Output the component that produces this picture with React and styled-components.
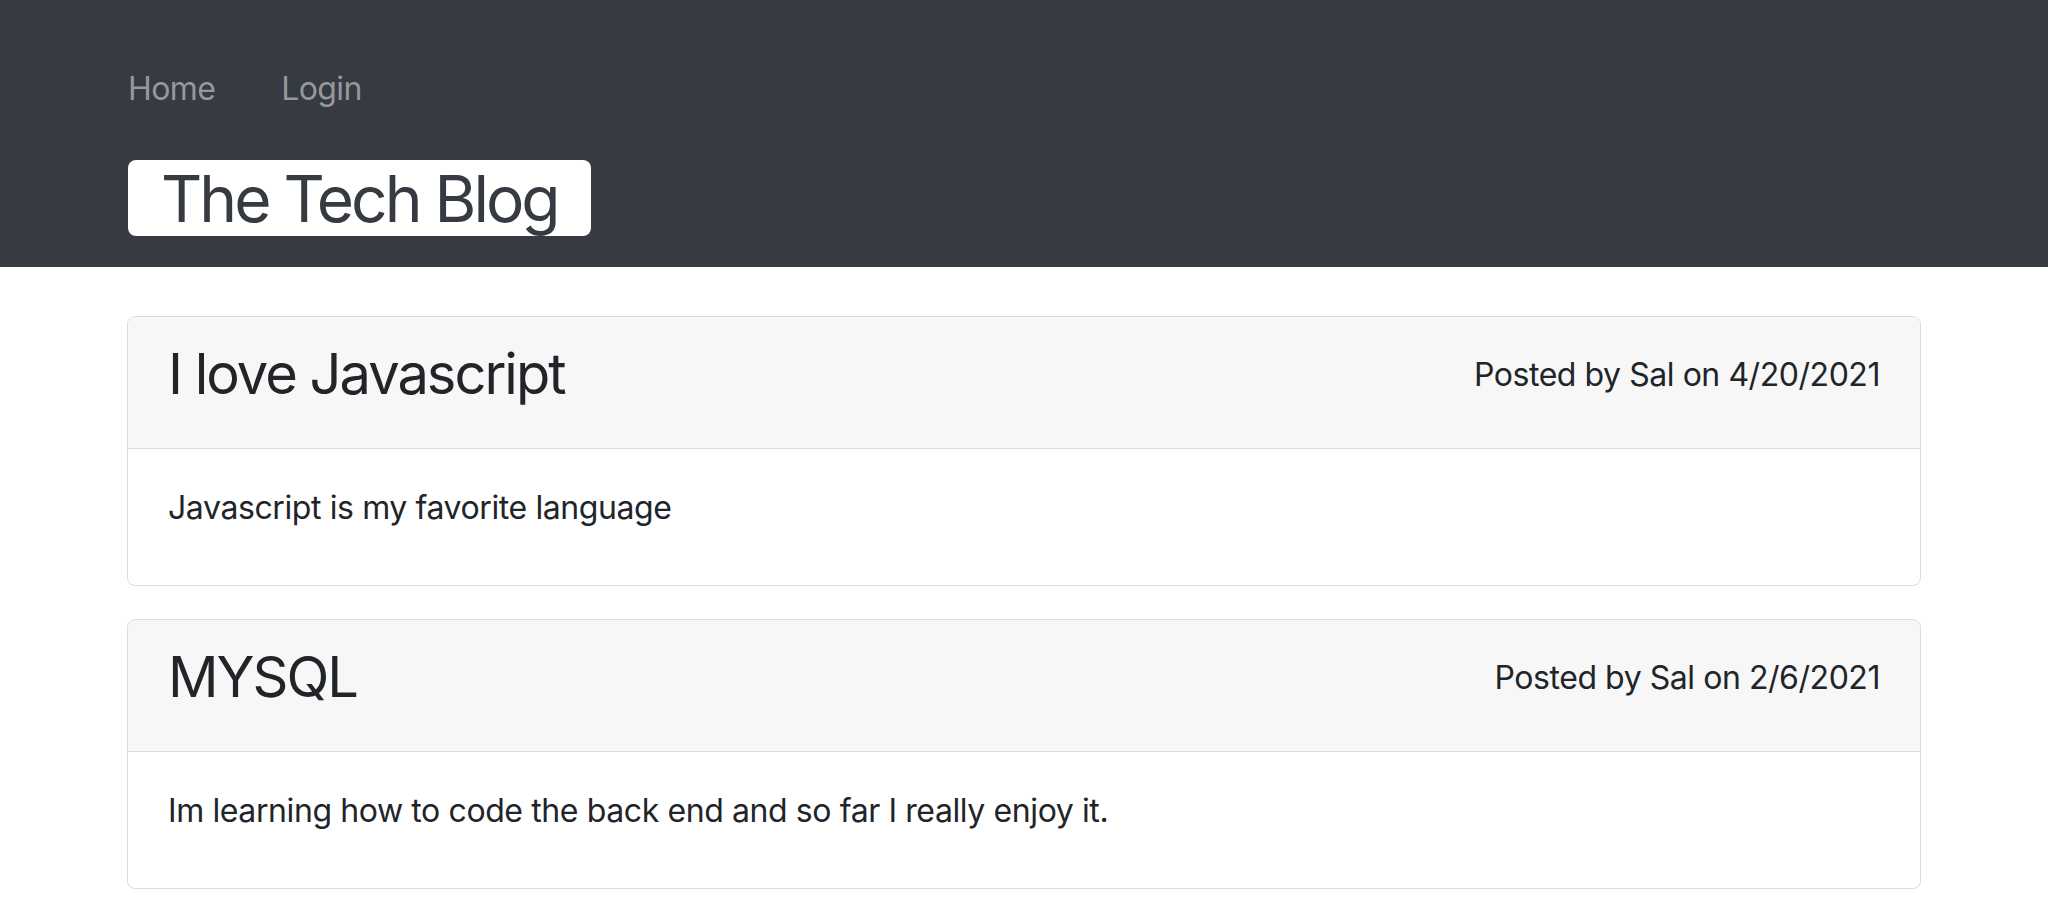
import React from 'react'
import styled, { createGlobalStyle } from 'styled-components'

const posts = [
  {
    id: 1,
    title: 'I love Javascript',
    author: 'Sal',
    date: '4/20/2021',
    body: 'Javascript is my favorite language',
  },
  {
    id: 2,
    title: 'MYSQL',
    author: 'Sal',
    date: '2/6/2021',
    body: 'Im learning how to code the back end and so far I really enjoy it.',
  },
]

const App = () => {
  return (
    <>
      <GlobalStyle />
      <Header>
        <Nav>
          <NavLink href="#">Home</NavLink>
          <NavLink href="#">Login</NavLink>
        </Nav>
        <Brand>The Tech Blog</Brand>
      </Header>
      <Main>
        {posts.map((post) => (
          <Card key={post.id}>
            <CardHeader>
              <PostTitle>{post.title}</PostTitle>
              <Meta>
                Posted by {post.author} on {post.date}
              </Meta>
            </CardHeader>
            <CardBody>
              <Text>{post.body}</Text>
            </CardBody>
          </Card>
        ))}
      </Main>
    </>
  )
}

export default App

const GlobalStyle = createGlobalStyle`
  * {
    box-sizing: border-box;
  }
  body {
    margin: 0;
    background: #fff;
    color: #212529;
    font-family: Inter, "Liberation Sans", sans-serif;
    font-size: 32px;
    line-height: 48px;
  }
`
const Header = styled.header`
  background-color: #363a41;
  padding: 65px 128px 31px;
`
const Nav = styled.nav`
  display: flex;
  gap: 66px;
  margin-bottom: 47px;
`
const NavLink = styled.a`
  color: #95989c;
  text-decoration: none;
  font-size: 32px;
  line-height: 48px;
  letter-spacing: -0.6px;
`
const Brand = styled.h1`
  display: inline-block;
  margin: 0;
  padding: 2px 33px 0;
  background: #fff;
  border-radius: 8px;
  color: #363a41;
  font-size: 64px;
  font-weight: 400;
  line-height: 74px;
  letter-spacing: -3px;
`
const Main = styled.main`
  width: 1794px;
  margin: 49px auto 0;
  display: flex;
  flex-direction: column;
  gap: 33px;
`
const Card = styled.article`
  border: 1px solid #dcdcdc;
  border-radius: 8px;
  overflow: hidden;
`
const CardHeader = styled.div`
  display: flex;
  justify-content: space-between;
  align-items: flex-start;
  padding: 24px 40px;
  background: #f7f7f7;
  border-bottom: 1px solid #dcdcdc;
`
const PostTitle = styled.h3`
  margin: 0 0 16px;
  font-size: 56px;
  font-weight: 400;
  line-height: 67px;
  letter-spacing: -2px;
`
const Meta = styled.p`
  margin: 0;
  font-size: 32px;
  line-height: 67px;
  letter-spacing: -0.45px;
`
const CardBody = styled.div`
  padding: 35px 40px 53px;
`
const Text = styled.p`
  margin: 0;
  font-size: 32px;
  line-height: 48px;
  letter-spacing: -0.4px;
`
